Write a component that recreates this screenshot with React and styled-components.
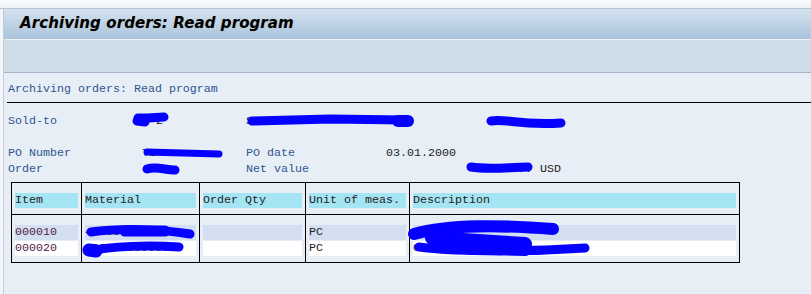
import React from "react";
import styled, { createGlobalStyle } from "styled-components";

const GlobalStyle = createGlobalStyle`
  html, body {
    margin: 0;
    padding: 0;
    background: #f2f5f9;
  }
  * {
    box-sizing: border-box;
  }
`;

const Page = styled.div`
  position: relative;
  width: 811px;
  height: 294px;
  overflow: hidden;
  background: #f2f5f9;
  display: flex;
  flex-direction: column;
`;

const TopStrip = styled.div`
  height: 9px;
  flex: 0 0 auto;
  background: linear-gradient(#fbfcfd, #eef2f6);
  border-bottom: 1px solid #b8c3d1;
`;

const Window = styled.div`
  flex: 1 1 auto;
  margin-left: 3px;
  border-left: 1px solid #c3ccd8;
  display: flex;
  flex-direction: column;
`;

const TitleBar = styled.div`
  height: 31px;
  padding: 4px 0 0 16px;
  background: linear-gradient(#d4e2ef, #aac4dc);
  border-bottom: 1px solid #eaf0f6;
`;

const Title = styled.h1`
  margin: 0;
  font-family: "DejaVu Sans", Verdana, sans-serif;
  font-size: 15px;
  font-weight: bold;
  font-style: italic;
  line-height: 20px;
  letter-spacing: 0.1px;
  color: #000;
  text-shadow: 0 0 1px rgba(120, 80, 20, 0.25);
`;

const Toolbar = styled.div`
  height: 33px;
  background: #cfdde8;
  border-bottom: 1px solid #a6b5c8;
`;

const Content = styled.div`
  flex: 1 1 auto;
  background: #e8eef6;
  padding: 8px 0 0 4px;
  font-family: "Liberation Mono", "Courier New", monospace;
  font-size: 11.67px;
  line-height: 16px;
`;

const ListTitle = styled.div`
  height: 16px;
  color: #2f5590;
  white-space: pre;
`;

const Rule = styled.div`
  height: 1px;
  background: #000;
  margin: 5px 0 10px -1px;
`;

const InfoGrid = styled.div`
  display: grid;
  grid-template-columns: 134px 104px 140px 154px auto;
  grid-auto-rows: 16px;
  white-space: pre;
`;

const Label = styled.span`
  color: #2f5590;
`;

const Value = styled.span`
  color: #222;
  text-align: ${(p) => (p.$right ? "right" : "left")};
  padding-right: ${(p) => (p.$right ? "8px" : "0")};
`;

const Blank = styled.div`
  grid-column: 1 / -1;
`;

const Table = styled.div`
  margin: 5px 0 0 3px;
  width: 729px;
  border: 1px solid #000;
  display: grid;
  grid-template-columns: 70px 118px 106px 104px 329px;
`;

const Col = styled.div`
  border-right: ${(p) => (p.$last ? "none" : "1px solid #000")};
  border-bottom: ${(p) => (p.$head ? "1px solid #000" : "none")};
  padding: 10px 3px 6px;
  display: flex;
  flex-direction: column;
  gap: 1px;
`;

const HeadCell = styled.div`
  height: 15px;
  line-height: 15px;
  background: #a4e4f3;
  color: #1e1e1e;
  white-space: pre;
`;

const DataCell = styled.div`
  height: 15px;
  line-height: 15px;
  background: ${(p) => (p.$shaded ? "#d3dff0" : "#ffffff")};
  color: ${(p) => (p.$item ? "#52213f" : "#1e1e1e")};
  white-space: pre;
  overflow: hidden;
`;

const Redactions = styled.svg`
  position: absolute;
  left: 0;
  top: 0;
  pointer-events: none;
`;

// hand-drawn blue redaction marks, in page coordinates
const marks = [
  { d: "M138 118 L148 118 L164 117", w: 9 },
  { d: "M137 121 L145 122", w: 9 },
  { d: "M252 121 L330 119 L404 120", w: 9 },
  { d: "M398 121 L408 121", w: 12 },
  { d: "M491 121 C505 118 520 126 561 123", w: 9 },
  { d: "M147 152 L219 154", w: 7 },
  { d: "M147 169 C156 166 166 170 175 170", w: 9 },
  { d: "M471 167 C490 170 510 167 528 167", w: 9 },
  { d: "M91 232 C120 228 160 229 190 234", w: 9 },
  { d: "M125 231 L165 231", w: 11 },
  { d: "M90 251 C110 246 150 245 179 247", w: 9 },
  { d: "M89 250 L96 251", w: 13 },
  { d: "M414 234 C450 224 500 225 553 229", w: 12 },
  { d: "M432 238 L525 244", w: 14 },
  { d: "M440 247 L525 250", w: 12 },
  { d: "M419 247 C470 253 540 251 585 248", w: 9 }
];

const columns = [
  { title: "Item", rows: ["000010", "000020"], item: true },
  { title: "Material", rows: ["4000000000000", "4000000000000"] },
  { title: "Order Qty", rows: ["", ""] },
  { title: "Unit of meas.", rows: ["PC", "PC"] },
  { title: "Description", rows: ["G", "GXXX"] }
];

export default function App() {
  return (
    <Page>
      <GlobalStyle />
      <TopStrip />
      <Window>
        <TitleBar>
          <Title>Archiving orders: Read program</Title>
        </TitleBar>
        <Toolbar />
        <Content>
          <ListTitle>Archiving orders: Read program</ListTitle>
          <Rule />
          <InfoGrid>
            <Label>Sold-to</Label>
            <Value>  2</Value>
            <Value>S</Value>
            <Value />
            <Value />
            <Blank />
            <Label>PO Number</Label>
            <Value>T1</Value>
            <Label>PO date</Label>
            <Value>03.01.2000</Value>
            <Value />
            <Label>Order</Label>
            <Value />
            <Label>Net value</Label>
            <Value $right>0.</Value>
            <Value>USD</Value>
          </InfoGrid>
          <Table>
            {columns.map((c, i) => (
              <Col $head key={"h" + i} $last={i === columns.length - 1}>
                <HeadCell>{c.title}</HeadCell>
              </Col>
            ))}
            {columns.map((c, i) => (
              <Col key={"b" + i} $last={i === columns.length - 1}>
                {c.rows.map((r, j) => (
                  <DataCell key={j} $shaded={j === 0} $item={c.item}>
                    {r}
                  </DataCell>
                ))}
              </Col>
            ))}
          </Table>
        </Content>
      </Window>
      <Redactions width="811" height="294" viewBox="0 0 811 294">
        {marks.map((m, i) => (
          <path
            key={i}
            d={m.d}
            fill="none"
            stroke="#0500ff"
            strokeWidth={m.w}
            strokeLinecap="round"
            strokeLinejoin="round"
          />
        ))}
      </Redactions>
    </Page>
  );
}
